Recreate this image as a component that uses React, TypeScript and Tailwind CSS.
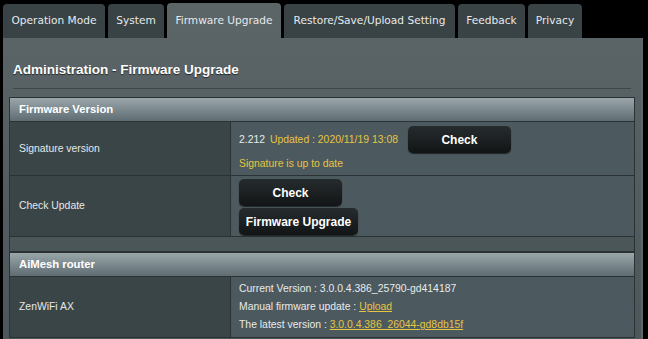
import React from "react";

const tabs = [
  { label: "Operation Mode", w: "w-[102px]" },
  { label: "System", w: "w-[56px]" },
  { label: "Firmware Upgrade", w: "w-[114px]", active: true },
  { label: "Restore/Save/Upload Setting", w: "w-[171px]" },
  { label: "Feedback", w: "w-[67px]" },
  { label: "Privacy", w: "w-[54px]" },
];

function DarkButton({ children, className = "" }: { children: React.ReactNode; className?: string }) {
  return (
    <button
      className={
        "h-[27px] rounded-[5px] bg-gradient-to-b from-[#262c2e] to-[#121516] text-white font-bold text-[12px] shadow-[0_1px_1px_rgba(0,0,0,0.6)] " +
        className
      }
    >
      {children}
    </button>
  );
}

function SectionHeader({ title }: { title: string }) {
  return (
    <div className="h-[25px] flex items-center px-[9px] bg-gradient-to-b from-[#9aa6aa] via-[#7c898e] to-[#5f6c71] border-y border-[#2a3235] text-white font-bold text-[11.3px]">
      {title}
    </div>
  );
}

function Row({ label, h, children }: { label: string; h: string; children: React.ReactNode }) {
  return (
    <div className={"flex border-b border-[#2a3235] " + h}>
      <div className="w-[221px] shrink-0 bg-[#3a4548] border-r border-[#2a3235] flex items-center px-[9px] text-[10.4px] text-[#e4e8e9]">
        {label}
      </div>
      <div className="flex-1 bg-[#4c595e] px-[8px] text-[10.4px] text-[#e8ebec]">{children}</div>
    </div>
  );
}

export default function App() {
  return (
    <div className="w-[648px] h-[339px] bg-black overflow-hidden" style={{ fontFamily: "'Liberation Sans', Arial, sans-serif" }}>
      <div className="flex gap-[3px] pl-[3px] pt-[4px] h-[38px]">
        {tabs.map((t) => (
          <div
            key={t.label}
            className={
              "h-[34px] rounded-t-[4px] flex items-center justify-center text-[10.6px] text-[#e6eaeb] " +
              t.w +
              (t.active ? " bg-[#5b6467] h-[35px] -mt-[1px]" : " bg-[#394245]")
            }
            style={{ fontFamily: "'DejaVu Sans', Verdana, sans-serif" }}
          >
            {t.label}
          </div>
        ))}
      </div>
      <div className="ml-[3px] mr-[5px] h-[301px] bg-gradient-to-b from-[#5a6366] to-[#4c575b] border-r-[2px] border-[#5d6669] px-[6px]">
        <div className="h-[50px] flex items-end pb-[8px] pl-[4px]">
          <h1 className="text-white font-bold text-[13.5px] [text-shadow:0_1px_1px_rgba(0,0,0,0.6)]">
            Administration - Firmware Upgrade
          </h1>
        </div>
        <div className="mx-[4px] h-[2px] border-t border-[#3e484b] border-b border-b-[#66707300]" />
        <div className="mt-[7px] border-x border-[#2a3235]">
          <SectionHeader title="Firmware Version" />
          <Row label="Signature version" h="h-[54px]">
            <div className="flex items-center pt-[4px] gap-[10px]">
              <div>
                2.212 <span className="text-[#e6c542] ml-[2px]">Updated : 2020/11/19 13:08</span>
              </div>
              <DarkButton className="w-[103px]">Check</DarkButton>
            </div>
            <div className="text-[#e6c542] mt-[3px]">Signature is up to date</div>
          </Row>
          <Row label="Check Update" h="h-[61px]">
            <div className="flex flex-col items-start gap-[2px] pt-[3px]">
              <DarkButton className="w-[103px]">Check</DarkButton>
              <DarkButton className="w-[119px]">Firmware Upgrade</DarkButton>
            </div>
          </Row>
          <div className="h-[15px] bg-[#4b5659] border-b border-[#2a3235]" />
          <SectionHeader title="AiMesh router" />
          <Row label="ZenWiFi AX" h="h-[61px]">
            <div className="flex flex-col justify-center h-full gap-[4px] leading-[14px]">
              <div>Current Version : 3.0.0.4.386_25790-gd414187</div>
              <div>
                Manual firmware update : <span className="text-[#e6c542] underline">Upload</span>
              </div>
              <div>
                The latest version : <span className="text-[#e6c542] underline">3.0.0.4.386_26044-gd8db15f</span>
              </div>
            </div>
          </Row>
        </div>
      </div>
    </div>
  );
}
